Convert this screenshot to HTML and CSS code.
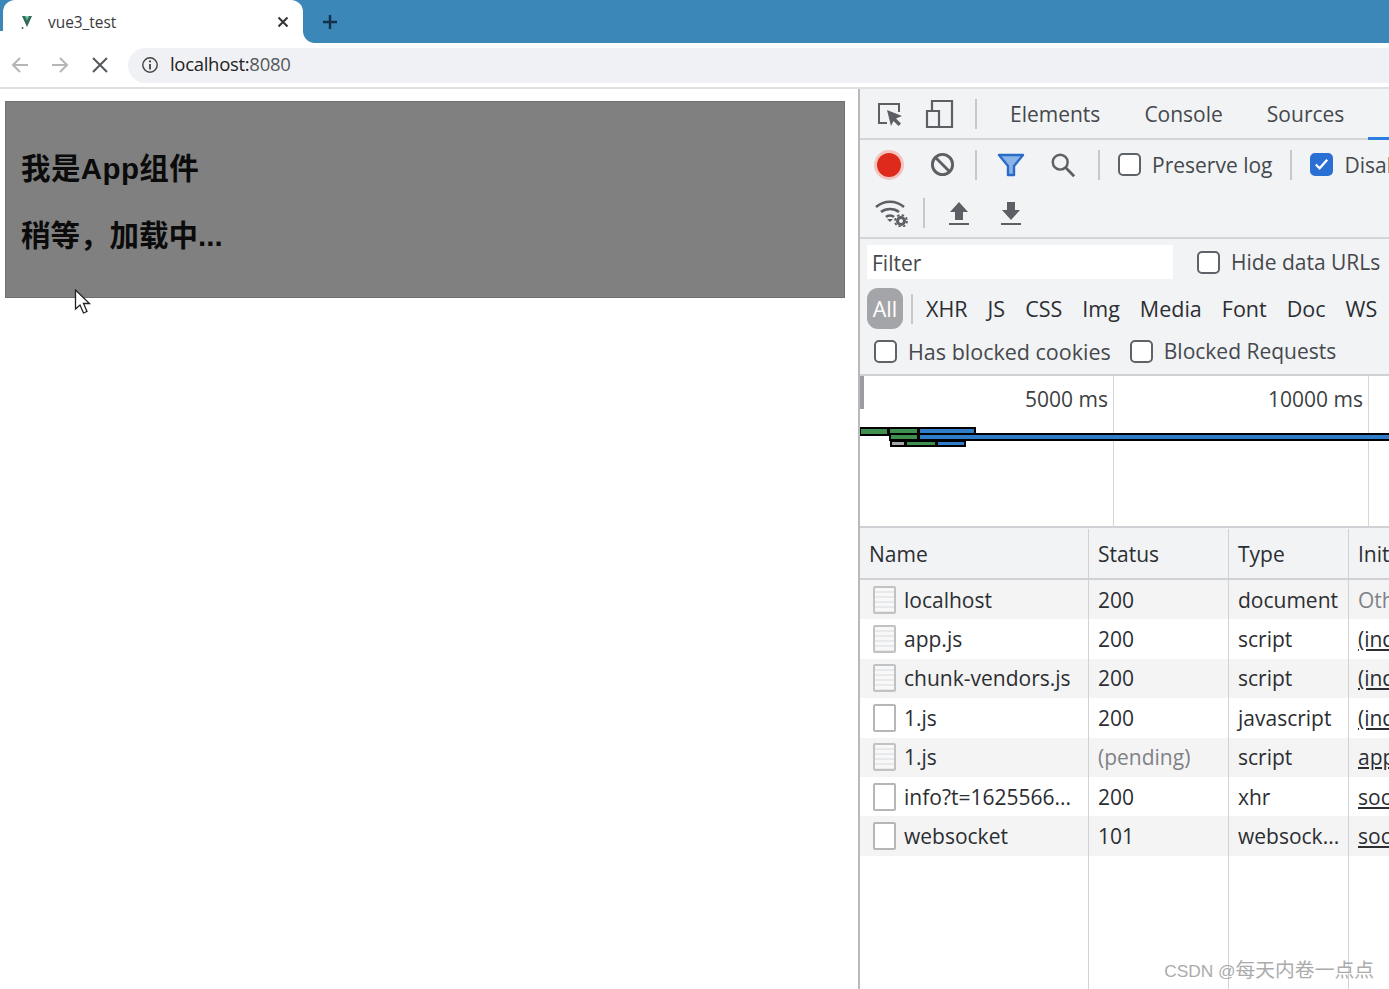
FILE: index.html
```html
<!DOCTYPE html>
<html lang="zh">
<head>
<meta charset="utf-8">
<title>vue3_test</title>
<link rel="stylesheet" href="styles.css">
</head>
<body>
<div class="tabbar">
  <div class="tab">
    <svg class="favicon" viewBox="0 0 16 16"><path d="M3 2h3l2 4 2-4h3L8 13z" fill="#35665c"/><path d="M6 2h1.500L8 4l.5-2H10L8 7z" fill="#41b883"/><circle cx="3.500" cy="14" r="1" fill="#555"/></svg>
    <span class="tab-title">vue3_test</span>
    <svg class="tab-close" viewBox="0 0 12 12"><path d="M1.500 1.500l9 9M10.500 1.500l-9 9" stroke="#333" stroke-width="2"/></svg>
  </div>
  <svg class="newtab" viewBox="0 0 16 16"><path d="M8 1v14M1 8h14" stroke="#14304a" stroke-width="2.400"/></svg>
</div>
<div class="toolbar">
  <svg class="nav nav-back" viewBox="0 0 20 20"><path d="M18 10H3M10 3l-7 7 7 7" fill="none" stroke="#b4b6b8" stroke-width="2"/></svg>
  <svg class="nav nav-fwd" viewBox="0 0 20 20"><path d="M2 10h15M10 3l7 7-7 7" fill="none" stroke="#b4b6b8" stroke-width="2"/></svg>
  <svg class="nav nav-stop" viewBox="0 0 20 20"><path d="M3 3l14 14M17 3L3 17" stroke="#55585c" stroke-width="2"/></svg>
  <div class="omnibox">
    <svg class="info" viewBox="0 0 20 20"><circle cx="10" cy="10" r="8" fill="none" stroke="#444" stroke-width="1.600"/><path d="M10 9v6" stroke="#444" stroke-width="2"/><circle cx="10" cy="6" r="1.200" fill="#444"/></svg>
    <span class="url">localhost:<span class="port">8080</span></span>
  </div>
</div>
<div class="main">
  <div class="page">
    <div class="app">
      <h3 class="app-line">我是App组件</h3>
      <h3 class="app-line">稍等，加载中...</h3>
    </div>
    <svg class="cursor" viewBox="0 0 18 26"><path d="M1.500 1v19l4.500-4 3.500 8 3.500-1.500-3.500-8H15.500z" fill="#fff" stroke="#222" stroke-width="1.300"/></svg>
  </div>
  <div class="devtools">
    <div class="dt-tabs">
      <svg class="ico ico-inspect" viewBox="0 0 28 28"><path d="M11 23H3V4h20v8" fill="none" stroke="#5c5f63" stroke-width="2"/><path d="M11 10l15 6-6 2.500 5 5-2.500 2.500-5-5L15 26z" fill="#5c5f63"/></svg>
      <svg class="ico ico-device" viewBox="0 0 30 30"><path d="M8 12V2h20v26H3V12h12v16" fill="none" stroke="#5c5f63" stroke-width="2.200"/></svg>
      <span class="vsep sep-tabs"></span>
      <span class="dt-tab">Elements</span>
      <span class="dt-tab">Console</span>
      <span class="dt-tab">Sources</span>
      <span class="tab-active"></span>
    </div>
    <div class="net-row net-row-main">
      <span class="rec"></span>
      <svg class="ico ico-clear" viewBox="0 0 26 26"><circle cx="13" cy="13" r="10.500" fill="none" stroke="#5c5f63" stroke-width="3"/><path d="M6 6l14 14" stroke="#5c5f63" stroke-width="3"/></svg>
      <span class="vsep sep-a"></span>
      <svg class="ico ico-filter" viewBox="0 0 28 24"><path d="M2 2h24l-9 11v9h-6v-9z" fill="#8ab4e8" stroke="#2b6cc8" stroke-width="2.400" stroke-linejoin="round"/></svg>
      <svg class="ico ico-search" viewBox="0 0 28 28"><circle cx="11" cy="11" r="8" fill="none" stroke="#5c5f63" stroke-width="2.600"/><path d="M17 17l9 9" stroke="#5c5f63" stroke-width="3"/></svg>
      <span class="vsep sep-b"></span>
      <span class="check check-preserve"></span>
      <span class="label">Preserve log</span>
      <span class="vsep sep-c"></span>
      <span class="check checked"><svg viewBox="0 0 20 20"><path d="M4 10l4 4 8-9" fill="none" stroke="#fff" stroke-width="2.400"/></svg></span>
      <span class="label">Disable cache</span>
    </div>
    <div class="net-row net-row-sub">
      <svg class="ico ico-wifi" viewBox="0 0 34 28"><path d="M2 8c8-7 20-7 28 0M7 13c5-4 13-4 18 0M12 18c2-2 6-2 8 0" fill="none" stroke="#5c5f63" stroke-width="2.600"/><path d="M13 20h6l-3 3z" fill="#5c5f63"/><circle cx="27" cy="22" r="3.500" fill="none" stroke="#5c5f63" stroke-width="3"/><circle cx="27" cy="22" r="6" fill="none" stroke="#5c5f63" stroke-width="1.800" stroke-dasharray="2.500 2.200"/></svg>
      <span class="vsep sep-d"></span>
      <svg class="ico ico-load" viewBox="0 0 22 24"><path d="M11 1l9 10h-5v8H7v-8H2z M1 22h20v2H1z" fill="#5c5f63"/></svg>
      <svg class="ico ico-load ico-down" viewBox="0 0 22 24"><path d="M7 1h8v8h5l-9 10L2 9h5z M1 22h20v2H1z" fill="#5c5f63"/></svg>
    </div>
    <div class="net-row net-row-filter">
      <span class="filter-input">Filter</span>
      <span class="check"></span>
      <span class="label">Hide data URLs</span>
    </div>
    <div class="net-row net-row-types">
      <span class="pill">All</span>
      <span class="vsep sep-e"></span>
      <span class="type">XHR</span><span class="type">JS</span><span class="type">CSS</span><span class="type">Img</span><span class="type">Media</span><span class="type">Font</span><span class="type">Doc</span><span class="type">WS</span>
    </div>
    <div class="net-row net-row-blocked">
      <span class="check"></span>
      <span class="label label-wide">Has blocked cookies</span>
      <span class="check check-second"></span>
      <span class="label">Blocked Requests</span>
    </div>
    <div class="overview">
      <div class="ov-handle"></div>
      <div class="ov-times">
        <span class="ov-time ov-time-a">5000 ms</span>
        <span class="ov-time ov-time-b">10000 ms</span>
      </div>
      <div class="bar b1 green"></div>
      <div class="bar b2 green"></div>
      <div class="bar b3 blue"></div>
      <div class="bar b4 green"></div>
      <div class="bar b5 blue"></div>
      <div class="bar b6 grey"></div>
      <div class="bar b7 green"></div>
      <div class="bar b8 blue"></div>
    </div>
    <div class="table">
      <div class="row head"><div class="cell">Name</div><div class="cell">Status</div><div class="cell">Type</div><div class="cell">Initiator</div></div>
      <div class="row alt"><div class="cell"><span class="doc lined"></span>localhost</div><div class="cell">200</div><div class="cell">document</div><div class="cell dim">Other</div></div>
      <div class="row"><div class="cell"><span class="doc lined"></span>app.js</div><div class="cell">200</div><div class="cell">script</div><div class="cell link">(index)</div></div>
      <div class="row alt"><div class="cell"><span class="doc lined"></span>chunk-vendors.js</div><div class="cell">200</div><div class="cell">script</div><div class="cell link">(index)</div></div>
      <div class="row"><div class="cell"><span class="doc"></span>1.js</div><div class="cell">200</div><div class="cell">javascript</div><div class="cell link">(index)</div></div>
      <div class="row alt"><div class="cell"><span class="doc lined"></span>1.js</div><div class="cell dim">(pending)</div><div class="cell">script</div><div class="cell link">app.js</div></div>
      <div class="row"><div class="cell"><span class="doc"></span>info?t=1625566...</div><div class="cell">200</div><div class="cell">xhr</div><div class="cell link">sockjs</div></div>
      <div class="row alt"><div class="cell"><span class="doc"></span>websocket</div><div class="cell">101</div><div class="cell">websock...</div><div class="cell link">sockjs</div></div>
      <div class="row filler"><div class="cell"></div><div class="cell"></div><div class="cell"></div><div class="cell"></div></div>
    </div>
    <div class="watermark"><span class="wm-latin">CSDN @</span>每天内卷一点点</div>
  </div>
</div>
</body>
</html>
```

FILE: styles.css
```css
* { box-sizing: border-box; }
html, body { margin: 0; height: 989px; overflow: hidden; }
body {
  display: flex;
  flex-direction: column;
  background: #fff;
  color: #2b2b2b;
  font-family: "Open Sans", "Noto Sans", "Noto Sans CJK SC", sans-serif;
  width: 1389px;
}

/* browser chrome */
.tabbar { height: 43px; flex: none; background: #3a87b8; display: flex; align-items: center; }
.tab {
  width: 300px; height: 43px; margin-left: 3px; background: #fff;
  border-radius: 12px 12px 0 0; display: flex; align-items: center;
  padding-left: 16px; position: relative;
}
.tab::after {
  content: ""; position: absolute; right: -12px; bottom: 0; width: 12px; height: 12px;
  background: radial-gradient(circle at 100% 0, #3a87b8 11.500px, #fff 12.500px);
}
.tab::before {
  content: ""; position: absolute; left: -3px; bottom: 0; width: 3px; height: 12px; background: #fff;
}
.favicon { width: 16px; height: 16px; flex: none; }
.tab-title { margin-left: 13px; padding-top: 1px; font-size: 15.400px; color: #3a3a3a; }
.tab-close { width: 12px; height: 12px; margin-left: auto; margin-right: 14px; }
.newtab { width: 16px; height: 16px; margin-left: 19px; }
.toolbar { height: 46px; flex: none; display: flex; align-items: center; border-bottom: 2px solid #dfe0e2; padding-left: 10px; }
.nav { width: 20px; height: 20px; flex: none; }
.nav-fwd { margin-left: 20px; }
.nav-stop { margin-left: 20px; }
.omnibox {
  flex: 1; margin-left: 18px; height: 35px; background: #f0f1f4;
  border-radius: 18px 0 0 18px; display: flex; align-items: center; padding-left: 13px;
}
.info { width: 18px; height: 18px; }
.url { margin-left: 11px; padding-bottom: 3px; font-size: 18.500px; color: #222; letter-spacing: -0.300px; }
.port { color: #55585c; }

/* layout */
.main { flex: 1; display: flex; min-height: 0; }
.page { width: 858px; flex: none; padding: 12px 13px 0 5px; position: relative; }
.app { height: 197px; background: #808080; border: 1px solid #707070; padding: 45px 15px 0; }
.app-line { margin: 0 0 24px; font-family: "Liberation Sans", "Noto Sans CJK SC", sans-serif; font-size: 29.500px; line-height: 43px; font-weight: 700; color: #0b0b0b; }
.app-line:first-child { letter-spacing: 0.400px; }
.cursor { position: absolute; left: 74px; top: 200px; width: 18px; height: 26px; }

/* devtools */
.devtools { flex: 1; min-width: 0; border-left: 2px solid #b8babd; background: #f2f3f5; display: flex; flex-direction: column; position: relative; overflow: hidden; font-size: 21px; color: #3c3f43; }
.ico { flex: none; display: block; }
.vsep { width: 2px; height: 30px; background: #c6c8cb; flex: none; }
.dt-tabs { height: 51px; flex: none; display: flex; align-items: center; border-bottom: 2px solid #d2d4d7; padding-left: 16px; position: relative; }
.ico-inspect { width: 28px; height: 28px; }
.ico-device { width: 30px; height: 30px; margin-left: 20px; }
.sep-tabs { margin-left: 21px; }
.dt-tab { margin-left: 44px; font-size: 21px; color: #45484c; white-space: nowrap; }
.sep-tabs + .dt-tab { margin-left: 33px; }
.tab-active { position: absolute; right: 0; bottom: -2px; width: 21px; height: 3px; background: #2b7de0; }
.net-row { flex: none; display: flex; align-items: center; white-space: nowrap; }
.net-row-main { height: 49px; padding-left: 17px; }
.rec { width: 24px; height: 24px; border-radius: 50%; background: #dd2a1c; box-shadow: 0 0 0 3px #f3c4bf; flex: none; }
.ico-clear { width: 25px; height: 25px; margin-left: 29px; }
.sep-a { margin-left: 20px; }
.ico-filter { width: 28px; height: 24px; margin-left: 20px; }
.ico-search { width: 26px; height: 26px; margin-left: 25px; }
.sep-b { margin-left: 22px; }
.check { width: 23px; height: 23px; border: 2px solid #5f6368; border-radius: 5px; background: #fff; flex: none; }
.check-preserve { margin-left: 18px; }
.label { margin-left: 11px; font-size: 21px; color: #45484c; }
.label-wide { font-size: 21.500px; }
.sep-c { margin-left: 18px; }
.checked { margin-left: 18px; background: #2a6fd4; border-color: #2a6fd4; padding: 0; }
.checked svg { display: block; width: 100%; height: 100%; }
.net-row-sub { height: 50px; padding-left: 14px; border-bottom: 2px solid #d2d4d7; }
.ico-wifi { width: 34px; height: 28px; }
.sep-d { margin-left: 15px; }
.ico-load { width: 22px; height: 24px; margin-left: 23px; }
.ico-down { margin-left: 30px; }
.net-row-filter { height: 46px; padding-left: 7px; }
.filter-input { width: 306px; height: 34px; background: #fff; display: flex; align-items: center; padding: 2px 0 0 5px; font-size: 21px; color: #45484c; flex: none; margin-right: 24px; }
.net-row-types { height: 47px; padding-left: 7px; }
.pill { width: 36px; height: 41px; border-radius: 11px; background: #a3a5a8; color: #fff; font-size: 21.500px; display: flex; align-items: center; justify-content: center; flex: none; }
.sep-e { margin-left: 8px; height: 30px; }
.type { margin-left: 20px; font-size: 21.500px; color: #2b2e32; }
.sep-e + .type { margin-left: 13px; }
.net-row-blocked { height: 42px; padding: 0 0 4px 14px; }
.check-second { margin-left: 19px; }
.overview { height: 154px; flex: none; background: #fff; border-top: 2px solid #cfd1d4; border-bottom: 2px solid #cfd1d4; position: relative; }
.ov-handle { position: absolute; left: 0; top: 0; width: 4px; height: 33px; background: #9a9c9f; }
.ov-times { position: absolute; inset: 0; display: flex; }
.ov-time { height: 100%; border-right: 1px solid #d4d6d8; text-align: right; padding: 8px 5px 0 0; font-size: 21px; color: #3c3f43; line-height: 30px; flex: none; }
.ov-time-a { width: 254px; }
.ov-time-b { width: 255px; }
.bar { position: absolute; height: 9px; border: 2px solid #000; }
.green { background: #3f8f4f; }
.blue { background: #2f7cc8; }
.grey { background: #a6a6a6; }
.b1 { left: -1px; top: 51px; width: 30px; }
.b2 { left: 28px; top: 51px; width: 31px; }
.b3 { left: 58px; top: 51px; width: 58px; }
.b4 { left: 29px; top: 57px; width: 30px; height: 8px; }
.b5 { left: 58px; top: 57px; width: 480px; height: 8px; }
.b6 { left: 30px; top: 64px; width: 16px; height: 7px; }
.b7 { left: 45px; top: 64px; width: 32px; height: 7px; }
.b8 { left: 76px; top: 64px; width: 30px; height: 7px; }
.table { flex: 1; min-height: 0; display: flex; flex-direction: column; background: #fff; margin-top: 1px; }
.row { display: grid; grid-template-columns: 229px 140px 120px 1fr; height: 39.400px; flex: none; background: #fff; font-size: 21px; color: #2b2e32; }
.alt { background: #f4f4f5; }
.head { height: 51px; background: #f2f3f5; border-bottom: 2px solid #cfd1d4; }
.filler { flex: 1; }
.cell { display: flex; align-items: center; padding: 0 0 0 9px; border-right: 1px solid #d0d2d5; white-space: nowrap; overflow: hidden; }
.cell:last-child { border-right: 0; }
.doc { width: 23px; height: 28px; border: 2px solid #b4b6b8; background: #fff; margin: 0 8px 0 4px; flex: none; border-radius: 2px; }
.lined { background: repeating-linear-gradient(#f8f8f8 0 3px, #e8e9ea 3px 5px); background-clip: padding-box; border-color: #c0c2c4; }
.dim { color: #808285; }
.link { text-decoration: underline; }
.watermark { position: absolute; right: 15px; bottom: 6px; font-family: "Liberation Sans", "Noto Sans CJK SC", sans-serif; font-size: 19.800px; color: #ababab; white-space: nowrap; }
.wm-latin { font-size: 17.300px; }
```
